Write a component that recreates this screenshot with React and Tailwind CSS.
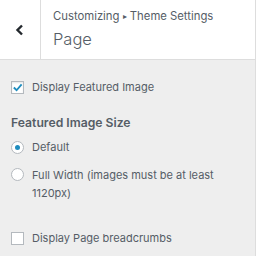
import React from "react";

export default function App() {
  return (
    <div className="w-[256px] h-[256px] overflow-hidden bg-[#eeeeee] border-r border-[#dddddd]" style={{ fontFamily: 'Inter, "Liberation Sans", sans-serif' }}>
      <div className="flex h-[60px] bg-white border-b border-[#dddddd]">
        <div className="w-[41px] border-r border-[#dddddd] flex items-center justify-center">
          <svg width="10" height="12" viewBox="0 0 10 12">
            <path d="M7 1.5 L2.5 6 L7 10.5" fill="none" stroke="#23282d" strokeWidth="2.4" />
          </svg>
        </div>
        <div className="pl-[12px] pt-[9px]">
          <div className="text-[11.3px] leading-[14px] text-[#555d66]">Customizing <span className="text-[8px] align-[1px]">▸</span> Theme Settings</div>
          <div className="text-[16.5px] leading-[24px] mt-[4px] text-[#555d66] font-light">Page</div>
        </div>
      </div>
      <div className="pl-[11px] pt-[20px] text-[11px] text-[#555d66]">
        <label className="flex items-center gap-[8px] h-[14px]">
          <span className="w-[13px] h-[13px] bg-white border border-[#b4b9be] flex items-center justify-center shadow-[inset_0_1px_2px_rgba(0,0,0,0.1)]">
            <svg width="11" height="11" viewBox="0 0 12 12">
              <path d="M2 6 L5 9 L10.5 2.5" fill="none" stroke="#1e8cbe" strokeWidth="2" />
            </svg>
          </span>
          <span>Display Featured Image</span>
        </label>
        <div className="mt-[20px] text-[12.2px] font-semibold text-[#555d66] leading-[18px]">Featured Image Size</div>
        <label className="flex items-center gap-[8px] mt-[8px] h-[14px]">
          <span className="w-[13px] h-[13px] rounded-full bg-white border border-[#b4b9be] flex items-center justify-center">
            <span className="w-[5px] h-[5px] rounded-full bg-[#1e8cbe]"></span>
          </span>
          <span>Default</span>
        </label>
        <label className="flex items-start gap-[8px] mt-[13px]">
          <span className="w-[13px] h-[13px] mt-[1px] rounded-full bg-white border border-[#b4b9be] shrink-0"></span>
          <span className="leading-[18px] w-[200px] -mt-[1px]">Full Width (images must be at least 1120px)</span>
        </label>
        <label className="flex items-center gap-[8px] mt-[29px] h-[14px]">
          <span className="w-[13px] h-[13px] bg-white border border-[#b4b9be]"></span>
          <span>Display Page breadcrumbs</span>
        </label>
      </div>
    </div>
  );
}
